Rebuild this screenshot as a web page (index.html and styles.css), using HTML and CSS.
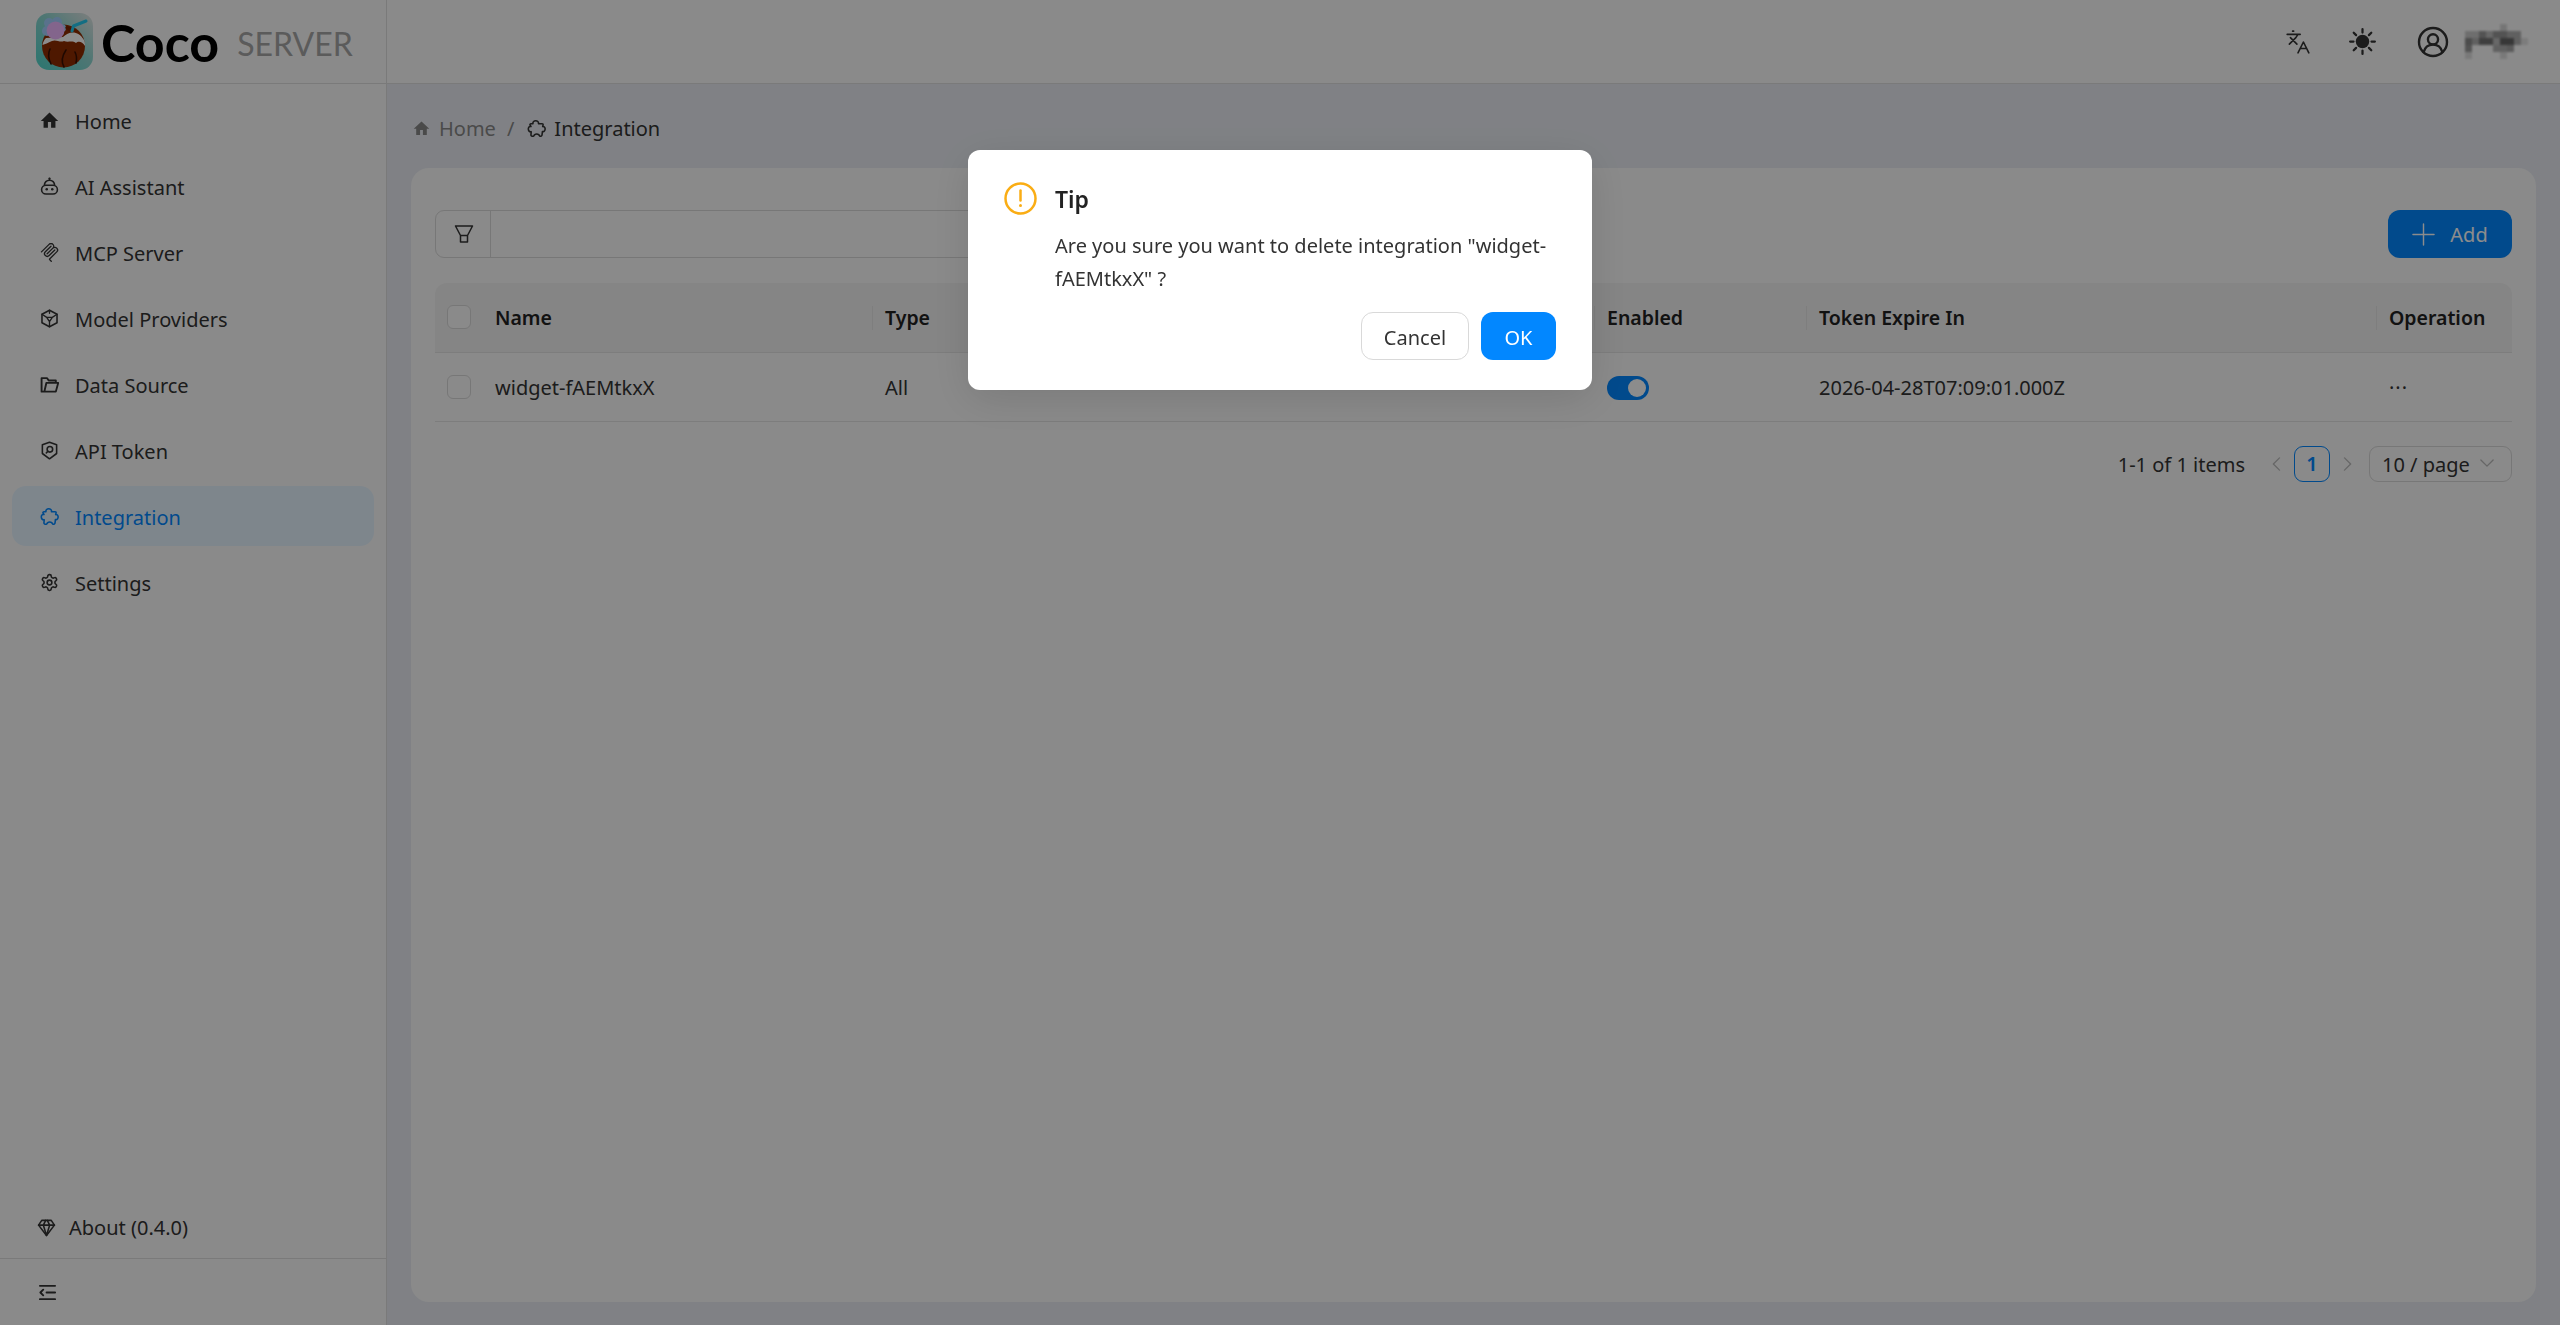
FILE: index.html
```html
<!DOCTYPE html>
<html lang="en">
<head>
    <meta charset="UTF-8">
    <title>Coco Server - Integration</title>
    <link rel="stylesheet" href="styles.css">
</head>
<body>
    <div class="app">
        <aside class="sidebar">
            <div class="logo">
                <svg class="logo-mark" viewBox="0 0 57 57">
                    <defs>
                        <linearGradient id="logoBg" x1="0" y1="1" x2="1" y2="0">
                            <stop offset="0" stop-color="#4fd8cc"/>
                            <stop offset="0.55" stop-color="#8fd8d2"/>
                            <stop offset="1" stop-color="#e6e6e6"/>
                        </linearGradient>
                    </defs>
                    <rect width="57" height="57" rx="13" fill="url(#logoBg)"/>
                    <circle cx="27.500" cy="33" r="21.500" fill="#8f2c00"/>
                    <path d="M27 24C33 18 42 17 48 27c1 2 1 4 1 6-3-5-7-5-9-3-4-3-8 0-12-2-4 2-8-2-12 0-4 2-7 3-9.500 4 .5-3 1.500-5 3.500-7z" fill="#ffffff"/>
                    <path d="M15 51c-3-6-3-11-1-15M28 54c-3-5-2-11 2-17M40 50c1-4 1-7-1-11" stroke="#3a1000" stroke-width="1.600" fill="none"/>
                    <g fill="#a2d0ff">
                        <circle cx="13" cy="10" r="5"/>
                        <circle cx="21" cy="9" r="5"/>
                        <circle cx="26" cy="15" r="4"/>
                        <circle cx="11" cy="18" r="5"/>
                    </g>
                    <circle cx="19.500" cy="17.500" r="9" fill="#eeb8ff"/>
                    <path d="M29 15c1-2 3-2 5-1l3 3-3 2z" fill="#7a2200"/>
                    <path d="M36 18l1.500-5L50 8" stroke="#24c8ee" stroke-width="3" fill="none" stroke-linecap="round"/>
                </svg>
                <span class="logo-name">Coco</span>
                <span class="logo-sub">SERVER</span>
            </div>

            <nav class="menu">
                <a class="menu-item">
                    <svg class="icon" viewBox="0 0 24 24"><path class="solid" d="M10 21v-7h4v7h5.500v-8.500H23L12 2 1 12.500h3.500V21z"/></svg>
                    <span>Home</span>
                </a>
                <a class="menu-item">
                    <svg class="icon" viewBox="0 0 24 24">
                        <circle cx="12" cy="2" r="1.400" class="solid"/>
                        <path d="M12 2v2M5.500 10.500a6.500 6.500 0 0 1 13 0M7.500 10.500h9a5.500 5.500 0 0 1 0 11h-9a5.500 5.500 0 0 1 0-11z"/>
                        <circle cx="8.500" cy="15.500" r="1.600" class="solid"/>
                        <circle cx="15.500" cy="15.500" r="1.600" class="solid"/>
                    </svg>
                    <span>AI Assistant</span>
                </a>
                <a class="menu-item">
                    <svg class="icon" viewBox="0 0 24 24">
                        <path class="solid" d="M15.688 2.343a2.588 2.588 0 00-3.61 0l-9.626 9.44a.863.863 0 01-1.203 0 .823.823 0 010-1.18l9.626-9.44a4.313 4.313 0 016.016 0 4.116 4.116 0 011.204 3.54 4.3 4.3 0 013.609 1.18l.05.05a4.115 4.115 0 010 5.9l-8.706 8.537a.274.274 0 000 .393l1.788 1.754a.823.823 0 010 1.18.863.863 0 01-1.203 0l-1.788-1.753a1.92 1.92 0 010-2.754l8.706-8.538a2.47 2.47 0 000-3.54l-.05-.049a2.588 2.588 0 00-3.607-.003l-7.172 7.034-.002.002-.098.097a.863.863 0 01-1.204 0 .823.823 0 010-1.18l7.273-7.133a2.47 2.47 0 00-.003-3.537z"/>
                        <path class="solid" d="M14.485 4.703a.823.823 0 000-1.18.863.863 0 00-1.204 0l-7.119 6.982a4.115 4.115 0 000 5.9 4.314 4.314 0 006.016 0l7.12-6.982a.823.823 0 000-1.18.863.863 0 00-1.204 0l-7.119 6.982a2.588 2.588 0 01-3.61 0 2.47 2.47 0 010-3.54l7.12-6.982z"/>
                    </svg>
                    <span>MCP Server</span>
                </a>
                <a class="menu-item">
                    <svg class="icon" viewBox="0 0 24 24">
                        <path d="M12 1.500l9.500 5.200v10.600L12 22.500l-9.500-5.200V6.700z"/>
                        <path d="M2.500 6.700l6 3.800M21.500 6.700l-6 3.800M12 22.500V16M8.500 10.500h7L12 16zM12 1.500v4" stroke-width="1.700"/>
                    </svg>
                    <span>Model Providers</span>
                </a>
                <a class="menu-item">
                    <svg class="icon" viewBox="0 0 24 24">
                        <path d="M5.500 21H2V4h7l2 3h9v3M5.500 21L8 10h15l-3 11z" stroke-width="2.400"/>
                    </svg>
                    <span>Data Source</span>
                </a>
                <a class="menu-item">
                    <svg class="icon" viewBox="0 0 24 24">
                        <path d="M12 1.500l9 3.300v11l-9 6.700-9-6.700v-11z"/>
                        <circle cx="12.500" cy="10.500" r="3.500"/>
                        <path d="M10 13l-2 2"/>
                    </svg>
                    <span>API Token</span>
                </a>
                <a class="menu-item active">
                    <svg class="icon" viewBox="0 0 24 24">
                        <path d="M7.500 6C6.500 1 15.500 1 14.500 6L19 6C20 6 20.500 6.700 20.300 7.500L19.800 9.600C24 8.500 24 17 19.500 15.800L19 20C18.800 21.500 17.500 22.200 16 21.600C15 18 9.500 18 8.500 21.600C6.500 22.300 4.800 21.500 5 20L5.300 16C.5 17 .5 8.500 5 9.500L3.800 7.600C3.500 6.700 4 6 5 6Z"/>
                    </svg>
                    <span>Integration</span>
                </a>
                <a class="menu-item">
                    <svg class="icon" viewBox="0 0 24 24">
                        <path d="M12.220 2h-.44a2 2 0 0 0-2 2v.18a2 2 0 0 1-1 1.730l-.43.25a2 2 0 0 1-2 0l-.15-.08a2 2 0 0 0-2.730.73l-.22.38a2 2 0 0 0 .73 2.730l.15.1a2 2 0 0 1 1 1.720v.51a2 2 0 0 1-1 1.740l-.15.09a2 2 0 0 0-.73 2.730l.22.38a2 2 0 0 0 2.730.73l.15-.08a2 2 0 0 1 2 0l.43.25a2 2 0 0 1 1 1.730V20a2 2 0 0 0 2 2h.44a2 2 0 0 0 2-2v-.18a2 2 0 0 1 1-1.730l.43-.25a2 2 0 0 1 2 0l.15.08a2 2 0 0 0 2.730-.73l.22-.39a2 2 0 0 0-.73-2.730l-.15-.08a2 2 0 0 1-1-1.740v-.5a2 2 0 0 1 1-1.740l.15-.09a2 2 0 0 0 .73-2.730l-.22-.38a2 2 0 0 0-2.730-.73l-.15.08a2 2 0 0 1-2 0l-.43-.25a2 2 0 0 1-1-1.730V4a2 2 0 0 0-2-2z"/>
                        <circle cx="12" cy="12" r="3"/>
                    </svg>
                    <span>Settings</span>
                </a>
            </nav>

            <div class="sidebar-about">
                <svg class="icon" viewBox="0 0 24 24">
                    <path d="M6 3h12l4 6-10 13L2 9z"/>
                    <path d="M11 3L8 9l4 13 4-13-3-6M2 9h20"/>
                </svg>
                <span>About (0.4.0)</span>
            </div>
            <div class="sidebar-collapse">
                <svg class="icon" viewBox="0 0 20 20">
                    <path d="M2 3h16M9 10h9M2 17h16M5.500 7L2.500 10l3 3"/>
                </svg>
            </div>
        </aside>

        <main class="main">
            <header class="topbar">
                <svg class="topbar-lang" viewBox="0 0 24 24">
                    <path d="M5 8l6 6M4 14l6-6 2-3M2 5h12M7 2h1M22 22l-5-10-5 10M14 18h6"/>
                </svg>
                <svg class="topbar-sun" viewBox="0 0 24 24">
                    <circle cx="12" cy="12" r="6" class="solid"/>
                    <path d="M12 1v3M12 20v3M1 12h3M20 12h3M4.200 4.200l2.100 2.100M17.700 17.700l2.100 2.100M4.200 19.800l2.100-2.100M17.700 6.300l2.100-2.100"/>
                </svg>
                <svg class="topbar-user" viewBox="0 0 24 24">
                    <circle cx="12" cy="12" r="10.500"/>
                    <circle cx="12" cy="10" r="3.800"/>
                    <path d="M5 19.500c1-3.500 3.500-5.500 7-5.500s6 2 7 5.500"/>
                </svg>
                <!-- user name is pixelated in the screenshot -->
                <svg class="topbar-name" viewBox="0 0 9 5" shape-rendering="crispEdges">
                    <rect x="5" y="0" width="1" height="1" opacity=".15"/>
                    <rect x="0" y="1" width="2" height="1" opacity=".2"/>
                    <rect x="2" y="1" width="1" height="1" opacity=".4"/>
                    <rect x="3" y="1" width="1" height="1" opacity=".25"/>
                    <rect x="4" y="1" width="2" height="1" opacity=".4"/>
                    <rect x="6" y="1" width="2" height="1" opacity=".3"/>
                    <rect x="0" y="2" width="1" height="1" opacity=".45"/>
                    <rect x="1" y="2" width="1" height="1" opacity=".3"/>
                    <rect x="2" y="2" width="2" height="1" opacity=".55"/>
                    <rect x="4" y="2" width="1" height="1" opacity=".25"/>
                    <rect x="5" y="2" width="2" height="1" opacity=".6"/>
                    <rect x="7" y="2" width="1" height="1" opacity=".3"/>
                    <rect x="8" y="2" width="1" height="1" opacity=".1"/>
                    <rect x="0" y="3" width="1" height="1" opacity=".4"/>
                    <rect x="4" y="3" width="2" height="1" opacity=".3"/>
                    <rect x="6" y="3" width="1" height="1" opacity=".35"/>
                    <rect x="0" y="4" width="1" height="1" opacity=".12"/>
                    <rect x="5" y="4" width="1" height="1" opacity=".12"/>
                </svg>
            </header>

            <div class="breadcrumb">
                <svg class="crumb-home" viewBox="0 0 24 24"><path class="solid" d="M10 21v-7h4v7h5.500v-8.500H23L12 2 1 12.500h3.500V21z"/></svg>
                <span class="crumb-link">Home</span>
                <span class="crumb-sep">/</span>
                <svg class="crumb-icon" viewBox="0 0 24 24">
                    <path d="M7.500 6C6.500 1 15.500 1 14.500 6L19 6C20 6 20.500 6.700 20.300 7.500L19.800 9.600C24 8.500 24 17 19.500 15.800L19 20C18.800 21.500 17.500 22.200 16 21.600C15 18 9.500 18 8.500 21.600C6.500 22.300 4.800 21.500 5 20L5.300 16C.5 17 .5 8.500 5 9.500L3.800 7.600C3.500 6.700 4 6 5 6Z"/>
                </svg>
                <span>Integration</span>
            </div>

            <section class="card">
                <div class="toolbar">
                    <div class="search">
                        <div class="search-filter">
                            <svg viewBox="0 0 20 20"><path d="M1.500 2h17l-5 9.500h-7zM6.500 11.500h7V18h-7z"/></svg>
                        </div>
                    </div>
                    <button class="btn-add">
                        <svg viewBox="0 0 24 24"><path d="M12 1v22M1 12h22"/></svg>
                        <span>Add</span>
                    </button>
                </div>

                <table class="table">
                    <colgroup>
                        <col class="col-check">
                        <col class="col-name">
                        <col class="col-type">
                        <col class="col-enabled">
                        <col class="col-expire">
                        <col class="col-op">
                    </colgroup>
                    <thead>
                        <tr>
                            <th><span class="checkbox"></span></th>
                            <th>Name</th>
                            <th class="sep">Type</th>
                            <th class="sep">Enabled</th>
                            <th class="sep">Token Expire In</th>
                            <th class="sep">Operation</th>
                        </tr>
                    </thead>
                    <tbody>
                        <tr>
                            <td><span class="checkbox"></span></td>
                            <td>widget-fAEMtkxX</td>
                            <td>All</td>
                            <td><span class="switch"><span class="switch-knob"></span></span></td>
                            <td>2026-04-28T07:09:01.000Z</td>
                            <td><span class="more">&middot;&middot;&middot;</span></td>
                        </tr>
                    </tbody>
                </table>

                <div class="pagination">
                    <span class="page-total">1-1 of 1 items</span>
                    <svg class="page-arrow" viewBox="0 0 10 16"><path d="M9 1L2 8l7 7"/></svg>
                    <span class="page-num">1</span>
                    <svg class="page-arrow" viewBox="0 0 10 16"><path d="M1 1l7 7-7 7"/></svg>
                    <div class="page-size">
                        <span>10 / page</span>
                        <svg viewBox="0 0 16 10"><path d="M1 1l7 7 7-7"/></svg>
                    </div>
                </div>
            </section>
        </main>
    </div>

    <div class="modal-mask">
        <div class="modal">
            <svg class="modal-icon" viewBox="0 0 33 33">
                <circle cx="16.500" cy="16.500" r="15"/>
                <path d="M16.500 8.500v10"/>
                <circle cx="16.500" cy="23.500" r="1.500"/>
            </svg>
            <div class="modal-body">
                <div class="modal-title">Tip</div>
                <div class="modal-text">Are you sure you want to delete integration "widget-fAEMtkxX" ?</div>
                <div class="modal-actions">
                    <button class="btn-cancel">Cancel</button>
                    <button class="btn-ok">OK</button>
                </div>
            </div>
        </div>
    </div>
</body>
</html>
```

FILE: styles.css
```css
:root {
    --primary-color: #0287ff;
    --text-color: #333;
    --border-color: #e4e4e4;
}

* {
    margin: 0;
    padding: 0;
    box-sizing: border-box;
    font-family: "Noto Sans", "Open Sans", sans-serif;
}

body {
    height: 100vh;
    overflow: hidden;
    font-size: 20px;
    color: var(--text-color);
    background: #e9ecf2;
}

svg {
    display: block;
    flex: none;
    fill: none;
    stroke: currentColor;
    stroke-width: 2;
    stroke-linecap: round;
    stroke-linejoin: round;
}

svg .solid {
    fill: currentColor;
    stroke: none;
}

.app {
    display: flex;
    height: 100vh;
}

/* sidebar */
.sidebar {
    width: 387px;
    flex: none;
    display: flex;
    flex-direction: column;
    background: #fcfcfc;
    border-right: 1px solid #dedede;
}

.logo {
    height: 84px;
    flex: none;
    display: flex;
    align-items: center;
    padding-left: 36px;
    border-bottom: 1px solid #dedede;
}

.logo-mark {
    width: 57px;
    height: 57px;
    stroke: none;
    margin-right: 8px;
}

.logo-name {
    font-family: "Lato", sans-serif;
    font-size: 52px;
    font-weight: 700;
    color: #000;
    margin-right: 18px;
}

.logo-sub {
    font-family: "Lato", sans-serif;
    font-size: 32px;
    color: #a6a6a6;
    margin-top: 4px;
}

.menu {
    display: flex;
    flex-direction: column;
    gap: 6px;
    padding: 6px 12px 0;
}

.menu-item {
    height: 60px;
    display: flex;
    align-items: center;
    gap: 17px;
    padding-left: 28px;
    border-radius: 14px;
}

.menu-item span {
    margin-left: -1px;
    padding-top: 3px;
}

.menu-item.active {
    background: #e6f4ff;
    color: var(--primary-color);
}

.icon {
    width: 19px;
    height: 19px;
}

.sidebar-about {
    margin-top: auto;
    height: 62px;
    display: flex;
    align-items: center;
    gap: 13px;
    padding-left: 37px;
}

.sidebar-collapse {
    height: 67px;
    flex: none;
    display: flex;
    align-items: center;
    padding-left: 38px;
    border-top: 1px solid #dedede;
}

/* main */
.main {
    flex: 1;
    min-width: 0;
    display: flex;
    flex-direction: column;
}

.topbar {
    height: 84px;
    flex: none;
    display: flex;
    align-items: center;
    justify-content: flex-end;
    padding-right: 32px;
    background: #fcfcfc;
    border-bottom: 1px solid #dedede;
}

.topbar-lang {
    width: 26px;
    height: 26px;
    stroke-width: 1.500;
    margin-right: 38px;
}

.topbar-sun {
    width: 27px;
    height: 27px;
    margin-right: 41px;
}

.topbar-user {
    width: 32px;
    height: 32px;
    stroke-width: 1.800;
    margin-right: 16px;
}

.topbar-name {
    width: 63px;
    height: 35px;
    fill: #000;
    stroke: none;
    filter: blur(1px);
}

.breadcrumb {
    height: 84px;
    flex: none;
    display: flex;
    align-items: center;
    padding: 4px 0 0 26px;
}

.crumb-home {
    width: 17px;
    height: 17px;
    color: #888;
    margin-right: 9px;
}

.crumb-link {
    color: #888;
}

.crumb-sep {
    color: #888;
    margin: 0 13px 0 11px;
}

.crumb-icon {
    width: 19px;
    height: 19px;
    margin-right: 8px;
}

.card {
    flex: 1;
    margin: 0 24px 23px;
    padding: 42px 24px 0;
    background: #fbfbfb;
    border-radius: 18px;
}

.toolbar {
    height: 48px;
    display: flex;
    justify-content: space-between;
}

.search {
    width: 770px;
    border: 1px solid #d9d9d9;
    border-radius: 9px;
}

.search-filter {
    width: 55px;
    height: 100%;
    display: flex;
    align-items: center;
    justify-content: center;
    padding-left: 2px;
    border-right: 1px solid #d9d9d9;
}

.search-filter svg {
    width: 20px;
    height: 20px;
    stroke-width: 1.500;
}

.btn-add {
    width: 124px;
    display: flex;
    align-items: center;
    justify-content: center;
    gap: 15px;
    border: none;
    border-radius: 12px;
    font-size: 20px;
    color: #fff;
    background: var(--primary-color);
}

.btn-add svg {
    width: 23px;
    height: 23px;
    stroke-width: 1.500;
}

/* table */
.table {
    width: 100%;
    margin-top: 25px;
    border-collapse: collapse;
    table-layout: fixed;
}

.col-check { width: 49px; }
.col-name { width: 388px; }
.col-type { width: 722px; }
.col-enabled { width: 212px; }
.col-expire { width: 570px; }
.col-op { width: 136px; }

.table th,
.table td {
    height: 69px;
    padding: 2px 13px 0;
    text-align: left;
    border-bottom: 1px solid var(--border-color);
}

.table th {
    padding-top: 1px;
}

.table th:first-child,
.table td:first-child {
    padding: 0 0 0 12px;
}

.table th:nth-child(2),
.table td:nth-child(2) {
    padding-left: 11px;
}

.table th {
    position: relative;
    font-size: 19.500px;
    font-weight: 600;
    color: #222;
    background: #f2f2f2;
}

.table th:first-child {
    border-top-left-radius: 12px;
}

.table th:last-child {
    border-top-right-radius: 12px;
}

.table th.sep::before {
    content: "";
    position: absolute;
    left: 0;
    top: 23px;
    height: 24px;
    width: 1px;
    background: #e6e6e6;
}

.checkbox {
    display: block;
    width: 24px;
    height: 24px;
    border: 1px solid #d9d9d9;
    border-radius: 6px;
    background: #fbfbfb;
}

.switch {
    display: block;
    width: 42px;
    height: 24px;
    position: relative;
    border-radius: 12px;
    background: var(--primary-color);
}

.switch-knob {
    position: absolute;
    right: 3px;
    top: 3px;
    width: 18px;
    height: 18px;
    border-radius: 50%;
    background: #fff;
}

.more {
    letter-spacing: 1px;
}

/* pagination */
.pagination {
    display: flex;
    align-items: center;
    justify-content: flex-end;
    margin-top: 24px;
}

.page-total {
    margin-right: 26px;
    padding-top: 2px;
}

.page-arrow {
    width: 10px;
    height: 14px;
    color: #bbb;
    stroke-width: 1.500;
}

.page-num {
    width: 36px;
    height: 36px;
    display: flex;
    align-items: center;
    justify-content: center;
    margin: 0 13px;
    font-weight: 600;
    color: var(--primary-color);
    border: 1px solid var(--primary-color);
    border-radius: 9px;
}

.page-size {
    width: 143px;
    height: 36px;
    display: flex;
    align-items: center;
    justify-content: space-between;
    margin-left: 16px;
    padding: 0 17px 0 12px;
    border: 1px solid #d9d9d9;
    border-radius: 9px;
}

.page-size span {
    padding-top: 2px;
}

.page-size svg {
    width: 14px;
    height: 9px;
    color: #bbb;
    stroke-width: 1.500;
}

/* confirm dialog */
.modal-mask {
    position: fixed;
    inset: 0;
    background: rgba(0, 0, 0, 0.45);
}

.modal {
    width: 624px;
    height: 240px;
    margin: 150px auto 0;
    padding: 30px 36px;
    display: flex;
    gap: 18px;
    background: #fff;
    border-radius: 12px;
    box-shadow: 0 9px 42px rgba(0, 0, 0, 0.12);
}

.modal-icon {
    width: 33px;
    height: 33px;
    margin-top: 2px;
    color: #faad14;
    stroke-width: 2.500;
}

.modal-icon circle:last-child {
    fill: currentColor;
    stroke: none;
}

.modal-body {
    flex: 1;
    min-width: 0;
}

.modal-title {
    height: 36px;
    padding-top: 1px;
    line-height: 36px;
    font-size: 23px;
    font-weight: 600;
    color: #222;
}

.modal-text {
    margin-top: 13px;
    line-height: 33px;
}

.modal-actions {
    display: flex;
    justify-content: flex-end;
    gap: 12px;
    margin-top: 17px;
}

.btn-cancel,
.btn-ok {
    height: 48px;
    padding-top: 2px;
    font-size: 20px;
    border-radius: 12px;
}

.btn-cancel {
    width: 108px;
    color: #333;
    background: #fff;
    border: 1.500px solid #d9d9d9;
}

.btn-ok {
    width: 75px;
    color: #fff;
    background: var(--primary-color);
    border: none;
}
```
